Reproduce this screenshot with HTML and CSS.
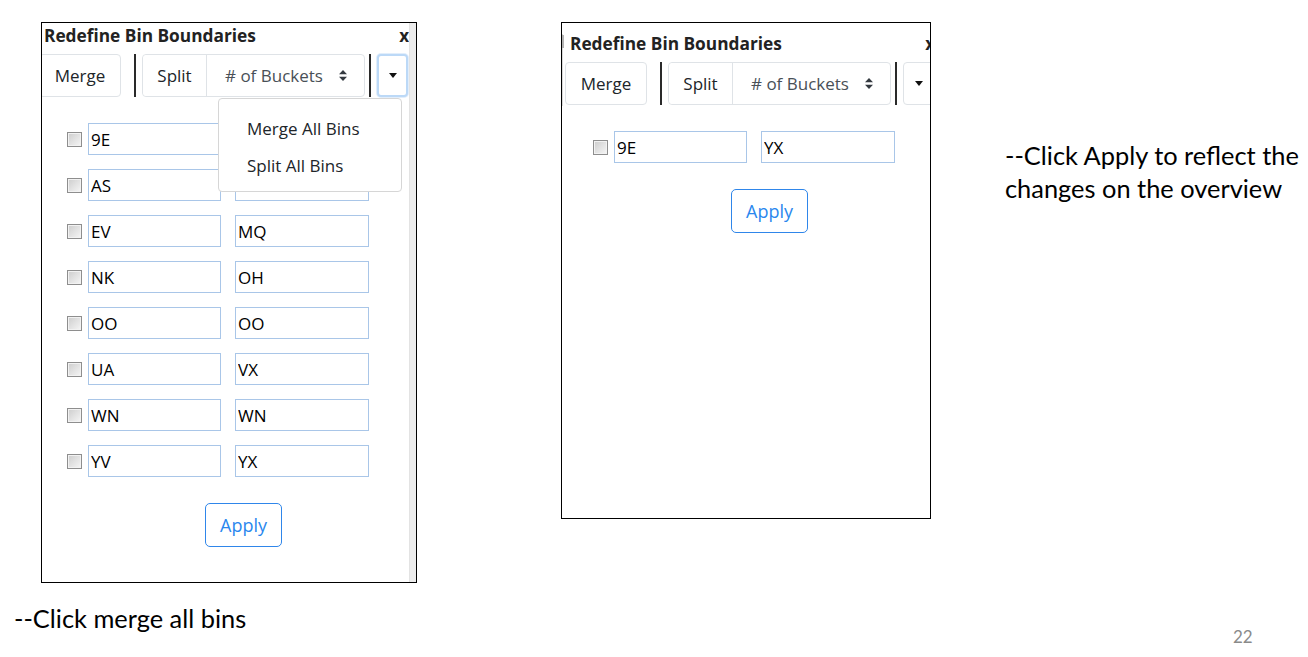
FILE: index.html
```html
<!DOCTYPE html>
<html lang="en">
<head>
<meta charset="utf-8">
<title>Redefine Bin Boundaries</title>
<link rel="stylesheet" href="styles.css">
</head>
<body>
<div class="slide">
  <div class="col col-left">
    <div class="panel panel-a">
      <div class="viewport">
        <div class="dialog">
          <div class="title-row"><span class="title">Redefine Bin Boundaries</span><span class="close">x</span></div>
          <div class="toolbar">
            <button class="btn btn-merge">Merge</button>
            <span class="sep sep-1"></span>
            <div class="split-group">
              <button class="split-btn">Split</button>
              <div class="select"><span>#&nbsp;of Buckets</span><svg class="updown" width="8" height="11" viewBox="0 0 8 11"><path d="M4 0L8 4.3H0z M0 6.7H8L4 11z" fill="#343a40"/></svg></div>
            </div>
            <span class="sep sep-2"></span>
            <div class="dd">
              <button class="toggle toggle-focus"><span class="caret"></span></button>
              <div class="menu">
                <div class="menu-item">Merge All Bins</div>
                <div class="menu-item">Split All Bins</div>
              </div>
            </div>
          </div>
          <div class="rows">
            <div class="row"><span class="chk"></span><input class="field" value="9E"><input class="field field-2" value="AR"></div>
            <div class="row"><span class="chk"></span><input class="field" value="AS"><input class="field field-2" value="EU"></div>
            <div class="row"><span class="chk"></span><input class="field" value="EV"><input class="field field-2" value="MQ"></div>
            <div class="row"><span class="chk"></span><input class="field" value="NK"><input class="field field-2" value="OH"></div>
            <div class="row"><span class="chk"></span><input class="field" value="OO"><input class="field field-2" value="OO"></div>
            <div class="row"><span class="chk"></span><input class="field" value="UA"><input class="field field-2" value="VX"></div>
            <div class="row"><span class="chk"></span><input class="field" value="WN"><input class="field field-2" value="WN"></div>
            <div class="row"><span class="chk"></span><input class="field" value="YV"><input class="field field-2" value="YX"></div>
          </div>
          <button class="apply">Apply</button>
        </div>
      </div>
      <div class="scrolltrack"></div>
    </div>
    <p class="caption caption-a">--Click merge all bins</p>
  </div>

  <div class="col col-mid">
    <div class="panel panel-b">
      <div class="viewport">
        <div class="dialog">
          <div class="title-row"><span class="title">Redefine Bin Boundaries</span><span class="close">x</span></div>
          <div class="toolbar">
            <button class="btn btn-merge">Merge</button>
            <span class="sep sep-1"></span>
            <div class="split-group">
              <button class="split-btn">Split</button>
              <div class="select"><span>#&nbsp;of Buckets</span><svg class="updown" width="8" height="11" viewBox="0 0 8 11"><path d="M4 0L8 4.3H0z M0 6.7H8L4 11z" fill="#343a40"/></svg></div>
            </div>
            <span class="sep sep-2"></span>
            <div class="dd">
              <button class="toggle"><span class="caret"></span></button>
            </div>
          </div>
          <div class="rows">
            <div class="row"><span class="chk"></span><input class="field" value="9E"><input class="field field-2" value="YX"></div>
          </div>
          <button class="apply">Apply</button>
        </div>
      </div>
    </div>
  </div>

  <div class="col col-right">
    <p class="caption caption-b">--Click Apply to reflect the<br>changes on the overview</p>
    <div class="page-num">22</div>
  </div>
</div>
</body>
</html>
```

FILE: styles.css
```css
html, body {
  margin: 0;
  background: #fff;
}

.slide {
  width: 1308px;
  height: 657px;
  box-sizing: border-box;
  padding-top: 22px;
  display: flex;
  align-items: flex-start;
  overflow: hidden;
  font-family: "Open Sans", "Noto Sans", sans-serif;
}

.col-left {
  margin-left: 14px;
  display: flex;
  flex-direction: column;
}

.col-mid {
  margin-left: 144px;
}

.col-right {
  margin-left: 74px;
  align-self: stretch;
  display: flex;
  flex-direction: column;
}

/* Panels */
.panel {
  box-sizing: border-box;
  border: 1px solid #000;
  background: #fff;
  display: flex;
}

.panel-a {
  margin-left: 27px;
  width: 376px;
  height: 561px;
}

.panel-b {
  width: 370px;
  height: 497px;
}

.viewport {
  flex: 1;
  min-width: 0;
  overflow: hidden;
  position: relative;
}

.scrolltrack {
  width: 7px;
  flex-shrink: 0;
  background: #ececec;
  border-left: 1px solid #e3e3e3;
  box-sizing: border-box;
}

.panel-b .viewport::before {
  content: "";
  position: absolute;
  left: 0;
  top: 11px;
  width: 1px;
  height: 72px;
  background: #dadada;
}

.panel-b .viewport::after {
  content: "";
  position: absolute;
  left: 0;
  top: 12px;
  width: 2px;
  height: 13px;
  background: #b4b4b4;
}

.dialog {
  width: 372px;
  flex-shrink: 0;
}

.panel-a .dialog {
  margin-left: -3px;
}

.panel-b .dialog {
  margin-left: 3px;
  margin-top: 8px;
}

/* Title */
.title-row {
  display: flex;
  justify-content: space-between;
  align-items: baseline;
  height: 24px;
  padding: 0 2px 0 5px;
  font-size: 17.3px;
  line-height: 25px;
  font-weight: 700;
  color: #222;
}

.close {
  font-size: 17px;
}

/* Toolbar */
.toolbar {
  display: flex;
  height: 43px;
  margin-top: 7px;
}

button {
  font-family: inherit;
  padding: 0;
  margin: 0;
  background: #fff;
  cursor: default;
}

.btn,
.split-btn,
.select {
  font-size: 17px;
  color: #212529;
}

.btn {
  box-sizing: border-box;
  height: 43px;
  border: 1px solid #dfe3e7;
  border-radius: 4px;
}

.btn-merge {
  width: 82px;
}

.sep {
  width: 2px;
  height: 43px;
  background: #2a2a2a;
  flex-shrink: 0;
}

.sep-1 {
  margin-left: 13px;
}

.sep-2 {
  margin-left: 4px;
}

.split-group {
  margin-left: 6px;
  width: 223px;
  height: 43px;
  box-sizing: border-box;
  border: 1px solid #dfe3e7;
  border-radius: 4px;
  display: flex;
  flex-shrink: 0;
}

.split-btn {
  width: 64px;
  border: none;
  border-right: 1px solid #dfe3e7;
  border-radius: 4px 0 0 4px;
}

.select {
  flex: 1;
  display: flex;
  align-items: center;
  padding-left: 18px;
  color: #495057;
}

.updown {
  margin-left: 16px;
}

.dd {
  margin-left: 6px;
  position: relative;
  flex-shrink: 0;
}

.toggle {
  box-sizing: border-box;
  width: 31px;
  height: 43px;
  border: 1px solid #dfe3e7;
  border-radius: 4px;
  display: flex;
  align-items: center;
  justify-content: center;
}

.toggle-focus {
  border: 2px solid #bcd9f7;
  box-shadow: 0 0 0 1px #e2eefb;
}

.caret {
  width: 0;
  height: 0;
  border-top: 5px solid #111;
  border-left: 4px solid transparent;
  border-right: 4px solid transparent;
}

.menu {
  position: absolute;
  left: -159px;
  top: 44px;
  width: 184px;
  height: 94px;
  box-sizing: border-box;
  border: 1px solid #d6d6d6;
  border-radius: 4px;
  background: #fff;
  padding: 11px 0 8px;
  z-index: 2;
}

.menu-item {
  padding-left: 28px;
  font-size: 17px;
  line-height: 37px;
  color: #212529;
  white-space: nowrap;
}

/* Rows */
.rows {
  margin-top: 26px;
  padding-left: 28px;
  display: flex;
  flex-direction: column;
  gap: 14px;
}

.row {
  display: flex;
  align-items: center;
  height: 32px;
}

.chk {
  width: 15px;
  height: 15px;
  box-sizing: border-box;
  border: 1px solid #8e8e8e;
  background: linear-gradient(135deg, #cdcdcd 0%, #f6f6f6 100%);
  box-shadow: inset 0 0 0 1px #f2f2f2;
  flex-shrink: 0;
}

.field {
  margin: 0 0 0 6px;
  width: 133px;
  height: 32px;
  box-sizing: border-box;
  border: 1px solid #a9c6e8;
  border-radius: 0;
  padding: 0 2px;
  font-family: "Open Sans", "Noto Sans", sans-serif;
  font-size: 17px;
  color: #000;
  background: #fff;
  outline: none;
}

.field-2 {
  margin-left: 14px;
  width: 134px;
}

.apply {
  display: block;
  margin: 26px 0 0 166px;
  width: 77px;
  height: 44px;
  box-sizing: border-box;
  border: 1px solid #2f86ea;
  border-radius: 5px;
  color: #2a87ee;
  font-size: 18px;
}

/* Slide captions */
.caption {
  margin: 0;
  font-family: Lato, "Open Sans", sans-serif;
  font-size: 25.4px;
  line-height: 30px;
  color: #000;
  white-space: nowrap;
}

.caption-a {
  margin-top: 20px;
}

.caption-b {
  margin-top: 117px;
  line-height: 33px;
}

.page-num {
  margin-top: auto;
  margin-bottom: 10px;
  margin-left: 228px;
  font-family: Lato, "Open Sans", sans-serif;
  font-size: 17px;
  line-height: 20px;
  color: #8a8a8a;
}
```
